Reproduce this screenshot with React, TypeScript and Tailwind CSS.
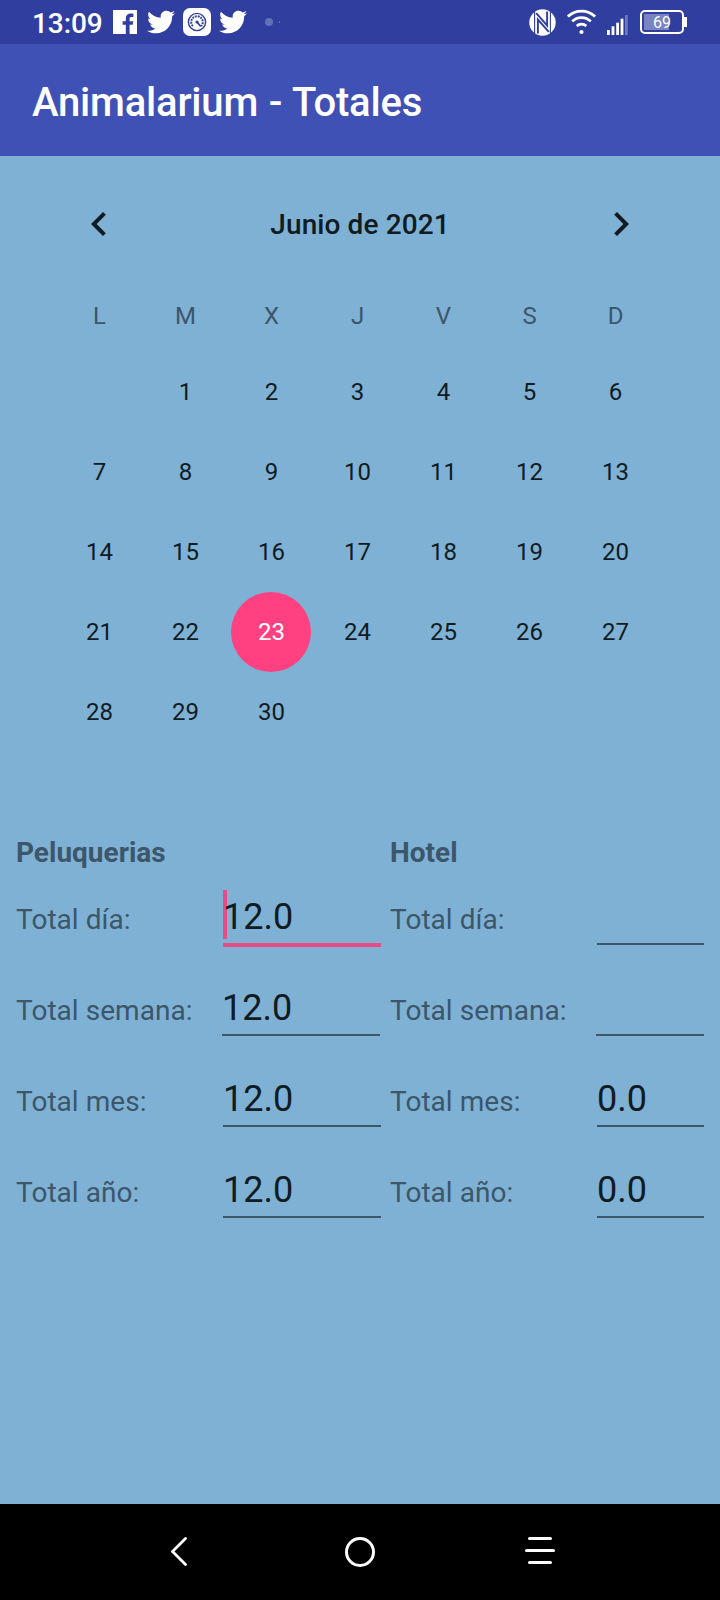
import React from "react";
import { FaTwitter } from "react-icons/fa";

const WEEKDAYS = ["L", "M", "X", "J", "V", "S", "D"];
const DAYS = Array.from({ length: 30 }, (_, i) => i + 1);
const SELECTED_DAY = 23;

type Total = { label: string; value: string; focused?: boolean; shifted?: boolean };

const GROOMING: Total[] = [
  { label: "Total día:", value: "12.0", focused: true },
  { label: "Total semana:", value: "12.0", shifted: true },
  { label: "Total mes:", value: "12.0" },
  { label: "Total año:", value: "12.0" },
];

const HOTEL: Total[] = [
  { label: "Total día:", value: "" },
  { label: "Total semana:", value: "", shifted: true },
  { label: "Total mes:", value: "0.0" },
  { label: "Total año:", value: "0.0" },
];

function FacebookIcon() {
  return (
    <svg className="h-6 w-6" viewBox="0 0 24 24" fill="#fff">
      <path d="M0 0H24V24H16.6V14.8H19.7L20.2 11.2H16.6V9C16.6 7.9 17.1 7.1 18.4 7.1H20.4V3.8C19.8 3.7 18.8 3.6 17.8 3.6C14.7 3.6 12.8 5.4 12.8 8.6V11.2H9.6V14.8H12.8V24H0Z" />
    </svg>
  );
}

function GaugeIcon() {
  return (
    <svg className="h-7 w-7" viewBox="0 0 28 28" fill="none">
      <rect width="28" height="28" rx="7" fill="#fff" />
      <circle cx="14" cy="14" r="8.6" stroke="#303f9f" strokeWidth="1.4" />
      <path d="M9.9 18.1A5.8 5.8 0 1 1 18.1 18.1" stroke="#303f9f" strokeWidth="2" strokeDasharray="1.9 0.9" />
      <path d="M14 14L17.2 17.8" stroke="#303f9f" strokeWidth="1.7" strokeLinecap="round" />
      <circle cx="14" cy="14" r="1.6" fill="#303f9f" />
    </svg>
  );
}

function NfcIcon() {
  return (
    <svg className="h-[27px] w-[27px]" viewBox="0 0 27 27" fill="none">
      <circle cx="13.5" cy="13.5" r="13.2" fill="#fff" />
      <path d="M5.6 0V27M21.4 0V27" stroke="#303f9f" strokeWidth="1.1" />
      <path d="M8.9 24.5V10.6L19.8 22.8M7.2 4.2L18.1 16.4V2.5" stroke="#303f9f" strokeWidth="1.9" />
    </svg>
  );
}

function WifiIcon() {
  return (
    <svg className="h-[26px] w-[29px]" viewBox="0 0 29 26" fill="none" stroke="#fff" strokeWidth="2.7">
      <path d="M0.9 7.6A19.5 19.5 0 0 1 28.1 7.6" />
      <path d="M5.2 12.4A13.2 13.2 0 0 1 23.8 12.4" />
      <path d="M9.7 17.1A7 7 0 0 1 19.3 17.1" />
      <circle cx="14.5" cy="23" r="2.1" fill="#fff" stroke="none" />
    </svg>
  );
}

function SignalIcon() {
  return (
    <svg className="h-5 w-[21px]" viewBox="0 0 21 20" fill="#fff">
      <rect x="0" y="15" width="2.8" height="5" />
      <rect x="4.6" y="11.3" width="2.8" height="8.7" />
      <rect x="9.2" y="7.7" width="2.8" height="12.3" />
      <rect x="13.6" y="3.7" width="2.8" height="16.3" />
      <rect x="18" y="0" width="2.8" height="20" opacity=".3" />
    </svg>
  );
}

function Battery() {
  return (
    <div className="flex items-center">
      <div className="flex h-6 w-11 items-center rounded-[5px] border-2 border-white p-[2px]">
        <div className="flex h-4 w-[25px] items-center bg-[#7a84c3] pt-[2px] pl-[9px] text-[16px] leading-none text-white">
          69
        </div>
      </div>
      <div className="h-2.5 w-[3px] bg-white" />
    </div>
  );
}

function StatusBar() {
  return (
    <header className="flex h-11 items-center justify-between bg-[#303f9f] pr-[33px] pl-[32px] text-white">
      <div className="flex h-full items-center">
        <span className="w-[81px] pt-[3px] text-[28px] leading-none font-medium tracking-[-0.1px]">13:09</span>
        <FacebookIcon />
        <FaTwitter className="ml-[10px] h-[28px] w-[28px]" />
        <span className="ml-2">
          <GaugeIcon />
        </span>
        <FaTwitter className="ml-2 h-[28px] w-[28px]" />
        <span className="ml-[18px] h-2 w-2 rounded-full bg-white/25" />
        <span className="ml-[6px] h-[2px] w-px bg-white/25" />
      </div>
      <div className="flex items-center">
        <NfcIcon />
        <span className="ml-[11px]">
          <WifiIcon />
        </span>
        <span className="mt-[5px] mr-3 ml-[11px]">
          <SignalIcon />
        </span>
        <Battery />
      </div>
    </header>
  );
}

function Calendar() {
  return (
    <section className="px-14 pt-7">
      <div className="flex h-20 items-center justify-between pr-[19px] pl-[19px]">
        <svg className="h-12 w-12" viewBox="0 0 24 24" fill="#101b22">
          <path d="M15.41 7.41L14 6l-6 6 6 6 1.41-1.41L10.83 12z" />
        </svg>
        <h2 className="pt-[2px] text-[28px] leading-none font-medium tracking-[0.1px] text-[#101b22]">Junio de 2021</h2>
        <svg className="h-12 w-12" viewBox="0 0 24 24" fill="#101b22">
          <path d="M10 6L8.59 7.41 13.17 12l-4.58 4.59L10 18l6-6z" />
        </svg>
      </div>
      <div className="mt-4 grid w-[602px] grid-cols-7 text-center text-2xl">
        {WEEKDAYS.map((d) => (
          <div key={d} className="flex h-[72px] items-center justify-center pl-px text-[#3c566a]">
            {d}
          </div>
        ))}
        <div />
        {DAYS.map((d) => (
          <div key={d} className="flex h-20 items-center justify-center text-[#101b22]">
            {d === SELECTED_DAY ? (
              <span className="flex h-20 w-20 items-center justify-center rounded-full bg-[#ff4081] pl-px text-white">
                {d}
              </span>
            ) : (
              <span className="pl-px">{d}</span>
            )}
          </div>
        ))}
      </div>
    </section>
  );
}

function Field({ value, focused, shifted, wide }: Total & { wide: boolean }) {
  const width = wide ? "w-[158px]" : shifted ? "w-[108px]" : "w-[107px]";
  const line = focused ? "border-b-4 border-[#e94b86] h-[57px]" : "border-b-2 border-[#3c566a] h-[55px]";
  return (
    <div className={`relative ${width} ${line} ${shifted ? "-ml-px" : ""}`}>
      {focused && <span className="absolute top-0 left-0 h-[49px] w-1 bg-[#e94b86]" />}
      <span className="relative block text-[36px] leading-[55px] text-[#101b22]">{value}</span>
    </div>
  );
}

function Totals({ title, items, wide }: { title: string; items: Total[]; wide: boolean }) {
  return (
    <div className={wide ? "w-[374px]" : "w-[314px]"}>
      <h3 className="h-[52px] text-[28px] leading-[30px] font-bold text-[#3c566a]">{title}</h3>
      {items.map((item) => (
        <div key={item.label} className="flex h-[91px] items-start">
          <span className="w-[207px] shrink-0 text-[28px] leading-[59px] tracking-[0.04px] text-[#3c566a]">{item.label}</span>
          <Field {...item} wide={wide} />
        </div>
      ))}
    </div>
  );
}

function NavigationBar() {
  return (
    <nav className="flex h-24 items-center justify-between bg-black pr-[165px] pl-[164px]">
      <svg className="h-[30px] w-[30px]" viewBox="0 0 30 30" fill="none" stroke="#fff" strokeWidth="2.8" strokeLinecap="round" strokeLinejoin="round">
        <path d="M21.5 1.5L8.5 14.5L21.5 27.5" />
      </svg>
      <svg className="h-[30px] w-[30px]" viewBox="0 0 30 30" fill="none" stroke="#fff" strokeWidth="3">
        <circle cx="15" cy="15" r="13.5" />
      </svg>
      <svg className="h-[30px] w-[30px]" viewBox="0 0 30 30" fill="none" stroke="#fff" strokeWidth="3" strokeLinecap="round">
        <path d="M4.5 1.5H25.5M1.5 13.5H28.5M4.5 25.5H25.5" />
      </svg>
    </nav>
  );
}

export default function App() {
  return (
    <div className="flex h-[1600px] w-[720px] flex-col overflow-hidden bg-[#7fb1d5] font-['Roboto',sans-serif]">
      <StatusBar />
      <div className="flex h-28 items-center bg-[#3f51b5] pt-[6px] pl-8">
        <h1 className="text-[40px] leading-none font-medium tracking-[-0.2px] text-white [word-spacing:1px]">Animalarium - Totales</h1>
      </div>
      <main className="flex-1">
        <Calendar />
        <section className="mt-[86px] flex pl-4">
          <Totals title="Peluquerias" items={GROOMING} wide />
          <Totals title="Hotel" items={HOTEL} wide={false} />
        </section>
      </main>
      <NavigationBar />
    </div>
  );
}
